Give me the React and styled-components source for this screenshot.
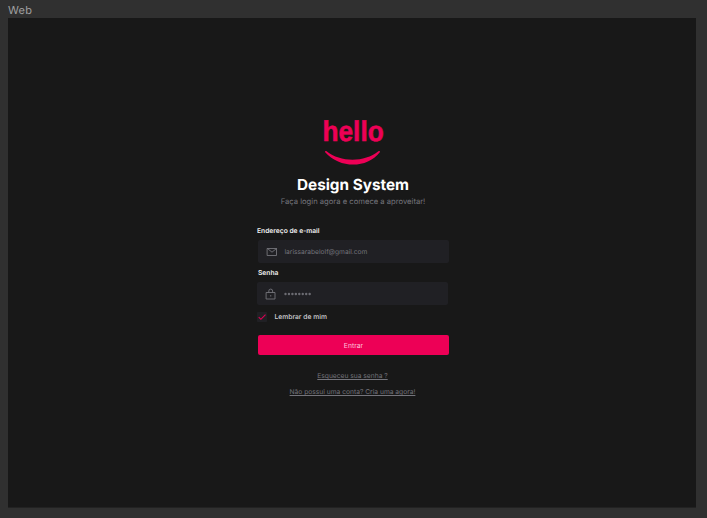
import React from "react";
import styled, { createGlobalStyle } from "styled-components";

const GlobalStyle = createGlobalStyle`
  * { box-sizing: border-box; }
  body {
    margin: 0;
    background: #303030;
    font-family: Inter, "Liberation Sans", sans-serif;
    text-rendering: geometricPrecision;
  }
`;

const Canvas = styled.div`
  height: 518px;
  padding: 0 11px 0 8px;
  background: #303030;
  overflow: hidden;
`;

const FrameLabel = styled.div`
  height: 18px;
  font-size: 11px;
  line-height: 20px;
  letter-spacing: 0.3px;
  color: #a0a0a0;
`;

const Frame = styled.main`
  height: 490px;
  padding-top: 102px;
  display: flex;
  flex-direction: column;
  align-items: center;
  background: #181818;
  border-bottom: 1px solid #222222;
`;

const Logo = styled.svg`
  display: block;
  width: 64px;
  height: 46px;
  margin-left: 3px;
  overflow: visible;
`;

const Title = styled.h1`
  margin: 9px 0 0 2px;
  font-size: 15.3px;
  line-height: 20px;
  font-weight: 700;
  color: #ffffff;
`;

const Subtitle = styled.p`
  margin: 1px 0 0 2px;
  font-size: 7.65px;
  line-height: 11px;
  color: #74747b;
`;

const Form = styled.form`
  display: flex;
  flex-direction: column;
  align-items: flex-start;
  width: 192px;
  margin: 19px 0 0 2px;
`;

const Label = styled.label`
  height: 10px;
  margin-left: ${(p) => p.$indent || "0"};
  font-size: 6.7px;
  line-height: 10px;
  font-weight: 600;
  color: #f0f0f0;
`;

const Field = styled.div`
  display: flex;
  align-items: center;
  width: 191px;
  height: 23px;
  margin: 4px 0 5px ${(p) => p.$indent || "0"};
  padding-left: ${(p) => (p.$indent ? "7.5px" : "8px")};
  border-radius: 2px;
  background: #202024;
`;

const FieldIcon = styled.svg`
  width: 12px;
  height: 12px;
  fill: none;
  stroke: #74747b;
  stroke-width: 0.9;
  stroke-linecap: round;
  stroke-linejoin: round;
`;

const FieldText = styled.span`
  margin-left: 7px;
  font-size: 6.65px;
  line-height: 10px;
  color: #74747b;
`;

const Dots = styled.svg`
  width: 30px;
  height: 4px;
  margin-left: 7px;
  fill: #6c6c73;
`;

const Remember = styled.div`
  display: flex;
  align-items: center;
  height: 10px;
  margin-top: 2px;
  gap: 7.5px;
`;

const Checkbox = styled.span`
  display: flex;
  width: 10px;
  height: 10px;
  border-radius: 1px;
  background: #202024;
`;

const Check = styled.svg`
  width: 10px;
  height: 10px;
  fill: none;
  stroke: #e00054;
  stroke-width: 1.1;
`;

const RememberText = styled.span`
  font-size: 6.75px;
  line-height: 10px;
  font-weight: 500;
  color: #d0d0d4;
`;

const Submit = styled.button`
  width: 191px;
  height: 20px;
  margin: 13px 0 0 1px;
  padding: 0;
  border: 0;
  border-radius: 2px;
  background: #ed0056;
  color: #ffc3da;
  font-family: inherit;
  font-size: 6.8px;
`;

const Links = styled.nav`
  display: flex;
  flex-direction: column;
  align-items: center;
  gap: 6px;
  margin: 16px 0 0 1px;
`;

const Link = styled.a`
  font-size: 6.68px;
  line-height: 10px;
  color: #74747b;
  text-decoration: underline;
  text-underline-offset: 1px;
  text-decoration-thickness: 1px;
`;

export default function App() {
  return (
    <>
      <GlobalStyle />
      <Canvas>
        <FrameLabel>Web</FrameLabel>
        <Frame>
          <Logo viewBox="0 0 64 46" aria-label="hello">
            <text x="0.5" y="21.2" textLength="61.2" lengthAdjust="spacingAndGlyphs"
              fontFamily="Liberation Sans, sans-serif" fontWeight="700" fontSize="28.5"
              fill="#ed0056" stroke="#ed0056" strokeWidth="0.5">hello</text>
            <path d="M4.6 31.2 C18.5 42.5 42.5 42.5 56.4 31.2 C57.6 30.4 58.6 31.3 57.6 32.5 C45.2 48.6 17.6 48.6 3.4 32.5 C2.4 31.3 3.4 30.4 4.6 31.2Z" fill="#ed0056" />
          </Logo>
          <Title>Design System</Title>
          <Subtitle>Faça login agora e comece a aproveitar!</Subtitle>
          <Form>
            <Label>Endereço de e-mail</Label>
            <Field $indent="1px">
              <FieldIcon viewBox="0 0 12 12">
                <path d="M1.5 2.5h9v7h-9zM1.5 2.5L6 6.2l4.5-3.7" />
              </FieldIcon>
              <FieldText>larissarabelolf@gmail.com</FieldText>
            </Field>
            <Label $indent="1px">Senha</Label>
            <Field>
              <FieldIcon viewBox="0 0 12 12">
                <path d="M1.5 4.5h8.5v6.5h-8.5zM3.8 4.5V3a1.9 1.9 0 0 1 3.8 0v1.5M5.75 7.4v.8" />
              </FieldIcon>
              <Dots viewBox="0 0 30 4">
                {[...Array(8)].map((_, i) => (
                  <circle key={i} cx={1.5 + i * 3.45} cy="2" r="1.2" />
                ))}
              </Dots>
            </Field>
            <Remember>
              <Checkbox>
                <Check viewBox="0 0 10 10"><path d="M1.7 5.1L3.9 7.3L8.5 2.7" /></Check>
              </Checkbox>
              <RememberText>Lembrar de mim</RememberText>
            </Remember>
            <Submit type="button">Entrar</Submit>
          </Form>
          <Links>
            <Link>Esqueceu sua senha ?</Link>
            <Link>Não possui uma conta? Cria uma agora!</Link>
          </Links>
        </Frame>
      </Canvas>
    </>
  );
}
